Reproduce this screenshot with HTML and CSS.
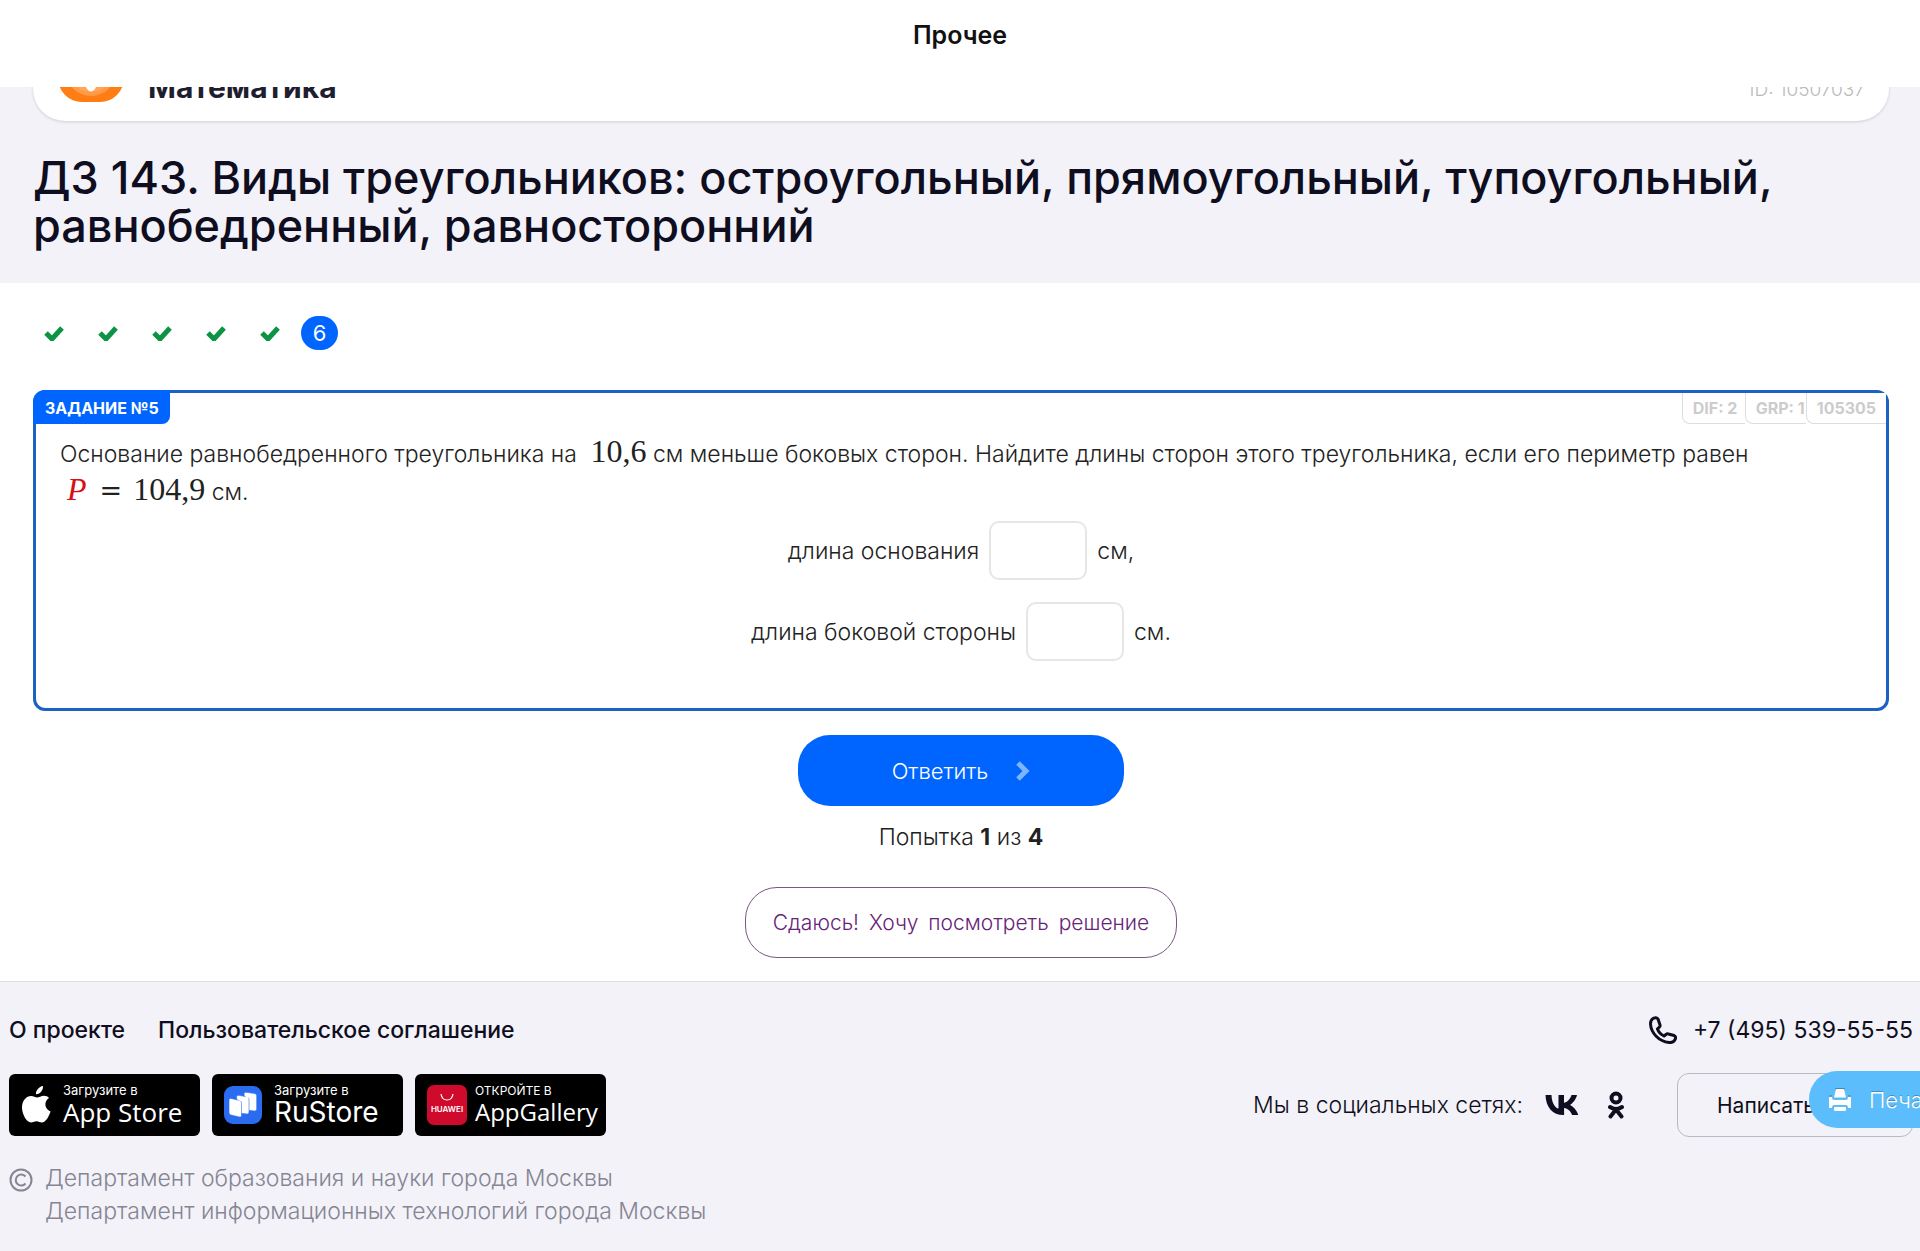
FILE: index.html
```
<!DOCTYPE html>
<html lang="ru">
<head>
    <meta charset="UTF-8">
    <meta name="viewport" content="width=device-width, initial-scale=1.0">
    <title>Прочее</title>
    <link rel="stylesheet" href="styles.css">
</head>
<body>
    <header class="topbar">Прочее</header>

    <section class="hero">
        <div class="subject">
            <svg class="subject-icon" viewBox="0 0 66 62" aria-hidden="true">
                <rect width="66" height="62" rx="24" fill="#ff7d12"/>
                <circle cx="33" cy="31" r="25" fill="#ff9a45"/>
                <circle cx="33" cy="28" r="24" fill="#ffa45a"/>
                <path d="M23 36h20l-6 13q-4 5-8 0z" fill="#fff"/>
            </svg>
            <span class="subject-name">Математика</span>
            <span class="subject-id">ID: 10507037</span>
        </div>
        <h1>ДЗ 143. Виды треугольников: остроугольный, прямоугольный, тупоугольный, равнобедренный, равносторонний</h1>
    </section>

    <main class="content">
        <nav class="steps" aria-label="Задания">
            <a class="step" href="#1" aria-label="Задание 1"><svg viewBox="0 0 20 16"><path d="M2 8l6 6L18 3"/></svg></a>
            <a class="step" href="#2" aria-label="Задание 2"><svg viewBox="0 0 20 16"><path d="M2 8l6 6L18 3"/></svg></a>
            <a class="step" href="#3" aria-label="Задание 3"><svg viewBox="0 0 20 16"><path d="M2 8l6 6L18 3"/></svg></a>
            <a class="step" href="#4" aria-label="Задание 4"><svg viewBox="0 0 20 16"><path d="M2 8l6 6L18 3"/></svg></a>
            <a class="step" href="#5" aria-label="Задание 5"><svg viewBox="0 0 20 16"><path d="M2 8l6 6L18 3"/></svg></a>
            <a class="step-current" href="#6">6</a>
        </nav>

        <form class="form">
            <div class="task">
                <div class="task-head">
                    <span class="task-number">ЗАДАНИЕ №5</span>
                    <div class="tags">
                        <span class="tag tag-dif">DIF: 2</span>
                        <span class="tag tag-grp">GRP: 1</span>
                        <span class="tag">105305</span>
                    </div>
                </div>
                <div class="task-body">
                    <p class="task-text">Основание равнобедренного треугольника на <span class="math">10,6</span> см меньше боковых сторон. Найдите длины сторон этого треугольника, если его периметр равен <span class="math"><i>P</i> <span class="eq">=</span> 104,9</span> см.</p>
                    <div class="answer">
                        <label for="base">длина основания</label>
                        <input id="base" type="text">
                        <span>см,</span>
                    </div>
                    <div class="answer">
                        <label for="side">длина боковой стороны</label>
                        <input id="side" type="text">
                        <span>см.</span>
                    </div>
                </div>
            </div>

            <button class="btn btn-primary" type="button">
                Ответить
                <svg class="chevron" viewBox="0 0 14 20" aria-hidden="true"><path d="M2 2l8 8-8 8"/></svg>
            </button>
            <p class="attempt">Попытка <b>1</b> из <b>4</b></p>
            <button class="btn btn-outline" type="button"><span>Сдаюсь!</span> <span>Хочу</span> <span>посмотреть</span> <span>решение</span></button>
        </form>
    </main>

    <footer class="footer">
        <div class="footer-row footer-links">
            <a class="footer-link" href="#about">О проекте</a>
            <a class="footer-link" href="#terms">Пользовательское соглашение</a>
            <a class="phone" href="tel:+74955395555">
                <svg viewBox="0 0 28 28" aria-hidden="true"><path d="M4 2.500C6 1.500 8 1.500 9 3L11 9Q11.500 10.500 10 11.500L8.500 13Q10 17.500 15 20L17 18.500Q18 17.500 19.500 18L25 19.500Q27 20.500 26.500 22.500Q25 27 20 26.500C10 25.500 2 17 1.500 8Q1.500 4 4 2.500Z"/></svg>
                +7 (495) 539-55-55
            </a>
        </div>

        <div class="footer-row footer-apps">
            <a class="store" href="#appstore">
                <svg class="apple" viewBox="0 0 32 40" aria-hidden="true"><path fill="#fff" d="M22 1c.4 4-3 8.500-7 8.300C14.600 5.500 18 1.600 22 1zM28 13c-5.500 3.500-4.500 11 1.500 13.500-1.500 5-5 11-8.500 11-2.300 0-3-1.300-5.500-1.300s-3.500 1.300-5.500 1.300C5.500 37.500 1 29 1 22.500 1 15.500 5.500 11 10 11c2.500 0 4.500 1.500 6 1.500S20.500 10.700 23 10.700c2 0 4 .8 5 2.300z"/></svg>
                <span class="store-text"><small>Загрузите в</small><strong>App Store</strong></span>
            </a>
            <a class="store store-ru" href="#rustore">
                <svg class="rustore" viewBox="0 0 38 38" aria-hidden="true">
                    <rect width="38" height="38" rx="9" fill="#2a6cf0"/>
                    <g fill="#fff" stroke="#2a6cf0" stroke-width=".6">
                        <path d="M20 8q0-2 2-1.700l8.700 1.200q2 .3 2 2.300V23q0 2.300-2 2l-8.700-1z"/>
                        <path d="M12.500 11q0-2 2-1.700l8.500 1.500q2 .3 2 2.300V26q0 2.300-2 2l-8.500-1z"/>
                        <path d="M5 14q0-2 2-1.600l8.500 2q2 .5 2 2.500v12.600q0 2-2 1.500L7 29q-2-.5-2-2.500z"/>
                    </g>
                    <path fill="#fff" d="M14 10.500l3 .7v4.300l-3-2zM21.500 8l3 .7v4l-3-2z"/>
                </svg>
                <span class="store-text"><small>Загрузите в</small><strong>RuStore</strong></span>
            </a>
            <a class="store store-gallery" href="#appgallery">
                <svg class="huawei" viewBox="0 0 40 40" aria-hidden="true">
                    <rect width="40" height="40" rx="7" fill="#cf0a2c"/>
                    <path d="M14 9q1 6 6 6t6-6" fill="none" stroke="#fff" stroke-width="1.200"/>
                    <text x="20" y="27" text-anchor="middle">HUAWEI</text>
                </svg>
                <span class="store-text"><small>ОТКРОЙТЕ В</small><strong>AppGallery</strong></span>
            </a>
            <span class="social-label">Мы в социальных сетях:</span>
            <a class="social" href="#vk" aria-label="ВКонтакте">
                <svg viewBox="0 0 34 22" width="34" height="22"><path fill="#0f0e20" d="M18.500 21C7.500 21 1 13.500.500 1h6c.3 9 4 12.800 7 13.600V1h5.500v7.800c3-.4 6.500-4 7.500-7.800H32c-1 4.800-4.500 8.400-7 9.900 2.500 1.200 6.500 4.200 8.300 10.100h-6.200c-1.200-3.800-4.300-6.700-8-7.100V21z"/></svg>
            </a>
            <a class="social" href="#ok" aria-label="Одноклассники">
                <svg viewBox="0 0 18 28" width="18" height="28"><g fill="none" stroke="#0f0e20" stroke-width="4"><circle cx="9" cy="7" r="4.500"/><path stroke-linecap="round" d="M3 16q6 4 12 0M9 18.500L3.500 25.500M9 18.500l5.500 7"/></g></svg>
            </a>
            <button class="write" type="button">Написать нам</button>
        </div>

        <div class="copyright">
            <svg viewBox="0 0 24 24" aria-hidden="true"><circle cx="12" cy="12" r="10.500"/><path d="M16.500 8.500a5.500 5.500 0 1 0 0 7"/></svg>
            <p>Департамент образования и науки города Москвы<br>Департамент информационных технологий города Москвы</p>
        </div>
    </footer>

    <button class="print" type="button">
        <svg viewBox="0 0 22 24" aria-hidden="true">
            <path fill="#fff" d="M5 9.500L6.500 3q.5-2 2-2h5q1.500 0 2 2L17 9.500zM0 9h3q0 3 2 3h12q2 0 2-3h3v11h-3q0-3-2-3H5q-2 0-2 3H0z"/>
            <rect x="5" y="19" width="12" height="4" rx="1" fill="#fff"/>
            <path d="M6.500.500h9M0 8h3M19 8h3" stroke="#5f7f95"/>
        </svg>
        Печать
    </button>
</body>
</html>
```
FILE: styles.css
```
* {
    box-sizing: border-box;
}
html {
    overflow-x: hidden;
}
body {
    margin: 0;
    min-height: 100vh;
    display: flex;
    flex-direction: column;
    font-family: Inter, "Liberation Sans", sans-serif;
    font-size: 23px;
    font-weight: 300;
    color: #222;
    background-color: #fff;
}
a {
    color: inherit;
    text-decoration: none;
}
p, h1 {
    margin: 0;
}
button, input {
    font: inherit;
}
button {
    cursor: pointer;
}

/* Верхняя панель поверх прокрученной страницы */
.topbar {
    position: fixed;
    top: 0;
    left: 0;
    right: 0;
    z-index: 2;
    height: 87px;
    padding-top: 20px;
    line-height: 30px;
    font-size: 25px;
    font-weight: 600;
    text-align: center;
    color: #111;
    background-color: #fff;
}

.hero {
    padding: 21px 31px 33px 33px;
    background-color: #f3f2f8;
}
.subject {
    display: flex;
    align-items: center;
    height: 100px;
    padding: 0 24px 0 25px;
    border-radius: 32px;
    background-color: #fff;
    box-shadow: 0 1px 3px rgba(0,0,0,0.15);
}
.subject-icon {
    width: 66px;
    height: 62px;
    margin-right: 24px;
}
.subject-name {
    font-size: 30px;
    font-weight: 700;
    padding-top: 32px;
    color: #1f1e30;
}
.subject-id {
    margin-left: auto;
    padding-top: 36px;
    font-size: 19px;
    color: #bbb;
}
h1 {
    padding-top: 33px;
    font-size: 45px;
    line-height: 48px;
    font-weight: 500;
    color: #0f0e20;
}

.content {
    padding: 33px 31px 23px 33px;
}
.steps {
    display: flex;
    align-items: center;
    gap: 12px;
    margin-bottom: 40px;
}
.step {
    width: 42px;
    height: 34px;
    display: flex;
    align-items: center;
    justify-content: center;
}
.step svg {
    width: 20px;
    height: 16px;
    fill: none;
    stroke: #0c9444;
    stroke-width: 5;
}
.step-current {
    width: 37px;
    line-height: 34px;
    margin-left: -2px;
    border-radius: 17px;
    font-size: 22px;
    font-weight: 400;
    text-align: center;
    color: #fff;
    background-color: #0065ff;
}

.form {
    display: flex;
    flex-direction: column;
    align-items: center;
}
.task {
    align-self: stretch;
    border: 3px solid #1c62c4;
    border-radius: 12px;
    margin-bottom: 24px;
}
.task-head {
    display: flex;
    justify-content: space-between;
    font-size: 16px;
    line-height: 30px;
    font-weight: 700;
}
.task-number {
    margin: -3px 0 0 -3px;
    padding: 3px 11px 0 12px;
    border-radius: 12px 0 8px 0;
    color: #fff;
    background-color: #0065ff;
}
.tags {
    display: flex;
}
.tag {
    padding: 0 10px;
    border: 1px solid #ddd;
    border-width: 0 0 1px 1px;
    border-radius: 0 0 0 8px;
    white-space: nowrap;
    color: #ccc;
    background-color: #fff;
}
.tag-dif {
    width: 63px;
}
.tag-grp {
    width: 61px;
    overflow: hidden;
}
.task-body {
    padding: 11px 24px 47px;
}
.task-text {
    margin-bottom: 10px;
    line-height: 38px;
}
.math {
    padding-left: 7px;
    font-family: "Liberation Serif", serif;
    font-size: 32px;
    line-height: 24px;
    font-weight: 400;
    white-space: nowrap;
}
.math i {
    color: #d80f16;
    padding-right: 2px;
}
.eq {
    padding: 0 3px;
    font-family: "DejaVu Serif", serif;
    font-size: 27px;
}
.answer {
    display: flex;
    justify-content: center;
    align-items: center;
    gap: 10px;
}
.answer + .answer {
    margin-top: 22px;
}
.answer input {
    width: 98px;
    height: 59px;
    padding: 0 10px;
    text-align: center;
    border: 2px solid #e6e6e6;
    border-radius: 10px;
    background-color: #fff;
}

.btn {
    display: flex;
    align-items: center;
    justify-content: center;
    height: 71px;
    border-radius: 32px;
}
.btn-primary {
    width: 326px;
    gap: 28px;
    border: none;
    font-size: 22px;
    color: #fff;
    background-color: #0065ff;
}
.chevron {
    width: 14px;
    height: 20px;
    fill: none;
    stroke: #7db5ff;
    stroke-width: 5;
}
.attempt {
    padding: 17px 0 35px;
    line-height: 29px;
}
.attempt b {
    font-weight: 700;
}
.btn-outline {
    gap: 10px;
    padding: 0 27px;
    border: 1px solid #78587f;
    font-size: 21px;
    color: #662378;
    background-color: #fff;
}

.footer {
    flex: 1;
    padding: 31px 7px 24px 9px;
    border-top: 1px solid #dddde3;
    color: #0f0e20;
    background-color: #f3f2f8;
}
.footer-row {
    display: flex;
    align-items: center;
}
.footer-links {
    gap: 33px;
    height: 34px;
    margin-bottom: 26px;
    font-weight: 500;
}
.phone {
    display: flex;
    align-items: center;
    gap: 16px;
    margin-left: auto;
    font-weight: 400;
}
.phone svg {
    width: 28px;
    height: 28px;
    fill: none;
    stroke: #0f0e20;
    stroke-width: 3;
}
.store {
    display: flex;
    align-items: center;
    width: 191px;
    height: 62px;
    margin-right: 12px;
    padding-left: 12px;
    border-radius: 6px;
    color: #fff;
    background-color: #000;
}
.store-text {
    display: flex;
    flex-direction: column;
}
.store small {
    font-size: 13px;
    line-height: 13px;
    font-weight: 400;
}
.store strong {
    font-family: "Open Sans", sans-serif;
    font-size: 26px;
    line-height: 30px;
    font-weight: 500;
}
.store-ru strong {
    font-family: Inter, sans-serif;
    font-weight: 400;
    font-size: 28px;
}
.store-gallery strong {
    font-size: 24px;
}
.store-gallery small {
    font-size: 12px;
}
.apple {
    width: 32px;
    height: 40px;
    margin-right: 10px;
}
.rustore {
    width: 38px;
    height: 38px;
    margin-right: 12px;
}
.huawei {
    width: 40px;
    height: 40px;
    margin-right: 8px;
}
.huawei text {
    font-size: 8px;
    font-weight: 600;
    fill: #fff;
}
.social-label {
    margin-left: auto;
    margin-right: 22px;
}
.social {
    display: flex;
    margin-right: 28px;
}
.write {
    width: 236px;
    height: 64px;
    margin-left: 24px;
    padding: 0 0 0 39px;
    border: 1px solid #b9b9c1;
    border-radius: 12px;
    font-size: 21px;
    font-weight: 400;
    text-align: left;
    color: #0f0e20;
    background-color: transparent;
}
.copyright {
    display: flex;
    gap: 12px;
    margin-top: 25px;
    line-height: 33px;
    color: #858594;
}
.copyright svg {
    width: 24px;
    height: 24px;
    margin-top: 6px;
    fill: none;
    stroke: #858594;
    stroke-width: 2;
}

/* Плавающая кнопка печати, выходит за правый край */
.print {
    position: fixed;
    right: -40px;
    bottom: 123px;
    display: flex;
    align-items: center;
    gap: 18px;
    width: 151px;
    height: 57px;
    padding: 0 0 0 20px;
    border: none;
    border-radius: 28px;
    font-size: 22px;
    color: #fff;
    text-shadow: 0 -1px 0 rgba(0,0,0,0.25);
    background-color: #5bbdfb;
}
.print svg {
    width: 22px;
    height: 24px;
    flex: none;
}
```
